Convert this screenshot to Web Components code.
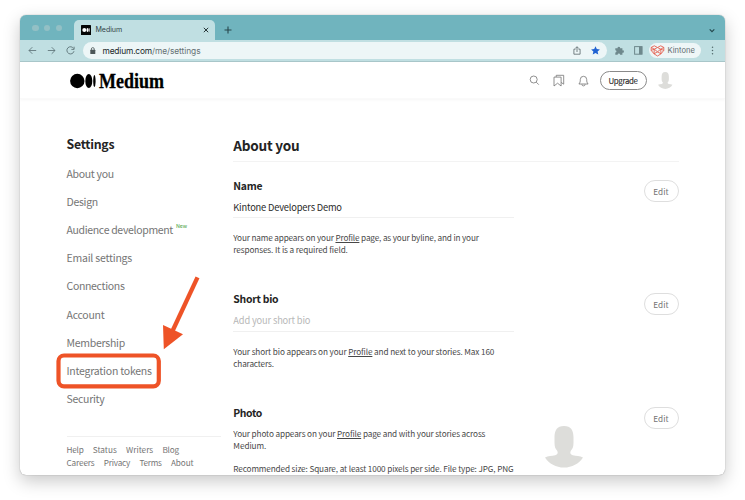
<!DOCTYPE html>
<html lang="en"><head><meta charset="utf-8"><title>Medium</title>
<style>
html,body{margin:0;background:#fff}
body{width:745px;height:500px;overflow:hidden;font-family:"Noto Sans CJK SC","Noto Sans",sans-serif;color:#292929}
</style></head><body>
<app-window></app-window>
<script>
const define=(name,html,after)=>customElements.define(name,class extends HTMLElement{
  connectedCallback(){
    if(this.shadowRoot)return;
    const t=document.createElement('template');
    t.innerHTML=typeof html==='function'?html(this):html;
    this.attachShadow({mode:'open'}).append(t.content.cloneNode(true));
    if(after)after(this);
  }
});

/* A single line of text: size in px, fit = target line width, reached by letter-spacing */
define('text-line',e=>`<style>:host{display:block;width:max-content;white-space:nowrap;font-size:${e.getAttribute('size')}px;line-height:${e.getAttribute('lh')||12}px}</style><slot></slot>`,e=>{
  const fit=+e.getAttribute('fit');
  if(!fit)return;
  const n=e.textContent.length, w=e.getBoundingClientRect().width;
  e.style.letterSpacing=((fit-w)/n).toFixed(3)+'px';
});

define('browser-tabs',`<style>
:host{display:flex;height:25px;background:#70b4be;align-items:flex-end;box-sizing:border-box}
.dots{display:flex;gap:5.2px;padding:0 11px 8.7px 12.3px;width:30.2px;height:6.6px}
.dots i{width:6.5px;height:6.5px;border-radius:50%;background:#93c0c5;flex:none}
.tab{margin-left:.5px;position:relative;width:141px;height:20px;background:#c0dfe2;border-radius:5px 5px 0 0;display:flex;align-items:center;box-sizing:border-box;padding:0 6px 0 7px;font-family:Inter,sans-serif;color:#344447}
.tab svg{flex:none}.tab .x{margin-left:auto}
.plus{margin:0 0 6.5px 9px}.more{margin:0 10px 7px auto}
svg{display:block}
</style>
<div class="dots"><i></i><i></i><i></i></div>
<div class="tab"><svg width="10" height="10"><rect width="10" height="10" rx=".6" fill="#050505"/><circle cx="3.3" cy="5" r="2" fill="#fff"/><ellipse cx="6.6" cy="5" rx="1.1" ry="1.9" fill="#fff"/><rect x="8.1" y="3.3" width=".6" height="3.4" fill="#fff"/></svg>
<text-line size="7.1" fit="26.6" style="margin:0 0 0 4.5px">Medium</text-line>
<svg class="x" width="6" height="6" viewBox="0 0 6 6"><path d="M.8.8l4.4 4.4M5.2.8L.8 5.2" stroke="#283638" stroke-width="1"/></svg></div>
<svg class="plus" width="8" height="8" viewBox="0 0 8 8"><path d="M4 .5v7M.5 4h7" stroke="#27464b" stroke-width="1.1"/></svg>
<svg class="more" width="6" height="5" viewBox="0 0 6 5"><path d="M.7 1.3L3 3.6 5.3 1.3" stroke="#24484e" stroke-width="1.2" fill="none"/></svg>`);

define('browser-bar',`<style>
:host{display:flex;height:22px;box-sizing:border-box;background:#c0dfe2;border-bottom:1px solid #a9c7ca;align-items:center;padding:0 10.5px 0 8px;font-family:Inter,sans-serif}
svg{display:block;flex:none}
.url{display:flex;align-items:center;flex:1;height:16.5px;background:#edf6f7;border-radius:9px;padding:0 6.5px 0 7.5px;margin:0 8px 0 8px}
.b{color:#20282a}.p{color:#657174}
.chip{display:flex;align-items:center;height:15.5px;width:52px;background:#eef6f7;border-radius:8px;margin:0 8.5px 0 6px;box-sizing:border-box;padding-left:1px;color:#5f6a6d}
</style>
<svg width="9" height="9" viewBox="0 0 9 9"><path d="M8.2 4.5H1M4.3 1.2L1 4.5l3.3 3.3" fill="none" stroke="#5d7478" stroke-width=".85"/></svg>
<svg style="margin-left:10px" width="9" height="9" viewBox="0 0 9 9"><path d="M.8 4.5H8M4.7 1.2L8 4.5 4.7 7.8" fill="none" stroke="#5d7478" stroke-width=".85"/></svg>
<svg style="margin-left:9.5px" width="9" height="9" viewBox="0 0 9 9"><path d="M7.6 2.5A3.6 3.6 0 1 0 8 5.2M8.1.7v2.7H5.4" fill="none" stroke="#5d7478" stroke-width=".9"/></svg>
<div class="url"><svg width="6" height="8" viewBox="0 0 6 8"><rect x=".3" y="2.8" width="5" height="4.2" rx=".5" fill="#4c5759"/><path d="M1.4 3V2a1.4 1.4 0 0 1 2.8 0v1" fill="none" stroke="#4c5759" stroke-width=".8"/></svg>
<text-line class="b" size="8.4" fit="49.5" style="margin-left:6.5px">medium.com</text-line><text-line class="p" size="8.4" fit="48.5">/me/settings</text-line>
<svg style="margin-left:auto" width="8" height="9" viewBox="0 0 8 9"><path d="M2.5 3.2H.9v5h6.2v-5H5.5M4 6V.9M2.2 2.5L4 .7l1.8 1.8" fill="none" stroke="#5b676a" stroke-width=".8"/></svg>
<svg style="margin-left:10.5px" width="9" height="9" viewBox="0 0 9 9"><path d="M4.5.2l1.3 2.9 3.1.3-2.3 2.1.7 3.1-2.8-1.6-2.8 1.6.7-3.1L.1 3.4l3.1-.3z" fill="#2163d2"/></svg></div>
<svg style="margin-left:.5px" width="9" height="9" viewBox="0 0 9 9"><path d="M.3 2.3h2.3a1.3 1.3 0 1 1 2.5 0h2.3v2.1a1.2 1.2 0 1 1 0 2.3v2.1H5.1a1.25 1.25 0 0 0-2.5 0H.3V6.6a1.15 1.15 0 0 0 0-2.3z" fill="#6e888c"/></svg>
<svg style="margin-left:10px" width="9" height="9" viewBox="0 0 9 9"><rect x=".6" y=".6" width="7.4" height="7.6" fill="none" stroke="#6e888c" stroke-width="1"/><rect x="5" y=".6" width="3.2" height="7.6" fill="#6e888c"/></svg>
<div class="chip"><svg width="15" height="12" viewBox="0 0 15 12"><g fill="none" stroke="#e5604f" stroke-width=".9" stroke-linejoin="round"><path d="M4.3.8L7.5 2.500 10.700.8 13.800 2.400V5.400L11 8.800 7.500 11 4 8.800 1.200 5.400V2.400z"/><path d="M1.200 2.400l3.100 1.800 3.200-1.700 3.200 1.700 3.100-1.800M1.200 5.400l3.100-1.200 3.200 2.600 3.200-2.600 3.100 1.200M4.300 4.200L4 8.800l3.500-2L11 8.800l-.3-4.600"/></g></svg><text-line size="7.6" fit="27.3" style="margin-left:2.5px">Kintone</text-line></div>
<svg width="5" height="9" viewBox="0 0 5 9"><g fill="#50686c"><circle cx="2.5" cy="1.3" r=".75"/><circle cx="2.5" cy="4.5" r=".75"/><circle cx="2.5" cy="7.7" r=".75"/></g></svg>`);

define('user-silhouette',e=>`<style>:host{display:block}svg{display:block}</style><svg width="${e.getAttribute('w')}" height="${e.getAttribute('h')}" viewBox="0 0 38 42" preserveAspectRatio="none"><path d="M19 0c7 0 9.5 4.500 9.500 11.500v5.500c0 4-1 6.500-2.700 8-1 2-.6 4 2 4.600 3.500.8 7 .8 10.200 2.200C34 38 27 42 19 42S4 38 0 31.800c3.200-1.400 6.700-1.400 10.200-2.200 2.600-.6 3-2.600 2-4.600-1.700-1.500-2.700-4-2.700-8v-5.500C9.500 4.500 12 0 19 0z" fill="#ddddda"/></svg>`);

define('site-nav',`<style>
:host{display:flex;height:37px;align-items:center;box-sizing:border-box;padding:1px 52.5px 0 50px;border-bottom:1px solid #fafafa;box-shadow:0 1px 3px #0000000a}
svg{display:block;flex:none}
.word{font-family:"Liberation Serif",serif;font-weight:bold;color:#000;-webkit-text-stroke:.3px #000;margin-left:3px;width:66px;transform:scaleX(.9);transform-origin:0 50%}
.up{display:flex;align-items:center;justify-content:center;width:47px;height:19px;box-sizing:border-box;border:1px solid #8a8a8a;border-radius:10px;margin:0 11.5px 0 11px;color:#292929;-webkit-text-stroke:.1px #292929}
</style>
<svg width="26" height="16" viewBox="0 0 26 16"><ellipse cx="7.3" cy="8" rx="7.2" ry="7.2"/><ellipse cx="18.8" cy="8" rx="3.5" ry="6.9"/><ellipse cx="24.4" cy="8" rx="1.2" ry="6.1"/></svg>
<text-line class="word" size="20" lh="22">Medium</text-line>
<svg style="margin-left:auto" width="11" height="11" viewBox="0 0 11 11"><circle cx="4.7" cy="4.5" r="3.5" fill="none" stroke="#757575" stroke-width=".8"/><path d="M7.3 7.2l2.5 2.5" stroke="#757575" stroke-width=".8"/></svg>
<svg style="margin-left:13px" width="12" height="13" viewBox="0 0 12 13"><path d="M1 3.1h7.1V12L4.55 9.2 1 12zM3.2 3V1.3h7.5v8.9L8.2 8.4" fill="none" stroke="#757575" stroke-width=".8"/></svg>
<svg style="margin-left:13px" width="11" height="12" viewBox="0 0 11 12"><path d="M.9 9c1.2-1.3 1.4-2.400 1.400-4.500a3.200 3.200 0 0 1 6.400 0C8.700 6.600 8.900 7.700 10.100 9zM3.900 9.300a1.600 1.600 0 0 0 3.200 0" fill="none" stroke="#757575" stroke-width=".8"/></svg>
<div class="up"><text-line size="7.9" fit="29">Upgrade</text-line></div>
<user-silhouette w="14.5" h="17"></user-silhouette>`);

define('side-menu',`<style>
:host{display:flex;flex-direction:column;width:154.5px;height:376px;color:#757575}
h1{margin:0;padding-top:37px;font-size:inherit;font-weight:bold;color:#242424}
.items{display:flex;flex-direction:column;margin-top:8px}
.items>div{height:28.12px;display:flex;align-items:center}
sup{line-height:0;font-size:inherit;margin:-9px 0 0 3px;color:#3f9e37}
footer{border-top:1px solid #f0f0f0;margin-top:23.3px;padding-top:4.8px}
footer div{display:flex;gap:9.3px;height:13px;align-items:center}
</style>
<h1><text-line size="12.3" lh="16" fit="47.8">Settings</text-line></h1>
<nav class="items">
<div><text-line size="10.5" fit="47.3">About you</text-line></div>
<div><text-line size="10.5" fit="31.5">Design</text-line></div>
<div><text-line size="10.5" fit="106.5">Audience development</text-line><sup><text-line size="5.4" lh="8" fit="11">New</text-line></sup></div>
<div><text-line size="10.5" fit="65.5">Email settings</text-line></div>
<div><text-line size="10.5" fit="58">Connections</text-line></div>
<div><text-line size="10.5" fit="38">Account</text-line></div>
<div><text-line size="10.5" fit="58.5">Membership</text-line></div>
<div><text-line size="10.5" fit="85.2">Integration tokens</text-line></div>
<div><text-line size="10.5" fit="38">Security</text-line></div>
</nav>
<footer><div><text-line size="8.2" fit="17">Help</text-line><text-line size="8.2" fit="24">Status</text-line><text-line size="8.2" fit="27">Writers</text-line><text-line size="8.2" fit="16.5">Blog</text-line></div>
<div><text-line size="8.2" fit="28">Careers</text-line><text-line size="8.2" fit="26.3">Privacy</text-line><text-line size="8.2" fit="22.3">Terms</text-line><text-line size="8.2" fit="22.5">About</text-line></div></footer>`);

define('pill-button',`<style>:host{display:flex;align-items:center;justify-content:center;width:35px;height:22px;box-sizing:border-box;border:1px solid #dedede;border-radius:11px;color:#757575;flex:none}</style><text-line size="8.2" style="letter-spacing:.05px"><slot></slot></text-line>`);

/* One settings row: title, optional value field, help text, edit button */
define('setting-row',`<style>
:host{display:flex;justify-content:space-between;align-items:flex-start}
.col{width:280.5px}
.t{font-weight:bold;color:#242424;height:13px}
.v ::slotted(*){margin-top:8px}
.v{border-bottom:1px solid #f0f0f0;height:26.8px;display:block;margin-bottom:13.2px;box-sizing:border-box;padding-top:.1px}
:host([novalue]) .v{display:none}
:host([novalue]) .t{margin-bottom:8.3px}
:host([novalue]) .col{width:312px}
.h{color:#484848}
pill-button{margin-top:1px}
</style><div class="col"><div class="t"><slot name="title"></slot></div><div class="v"><slot name="value"></slot></div><div class="h"><slot></slot></div></div><slot name="art"></slot><pill-button>Edit</pill-button>`);

define('settings-main',`<style>
:host{display:block;flex:1;height:376px;overflow:hidden}
h2{margin:0;font-size:inherit;height:63px;padding-top:37px;box-sizing:border-box;border-bottom:1px solid #f3f3f3;color:#242424}
setting-row{height:113.5px}
u{text-underline-offset:1px;text-decoration-thickness:.7px}
.first{margin-top:16.5px}
</style>
<h2><text-line size="13.6" lh="18" fit="66">About you</text-line></h2>
<setting-row class="first"><text-line slot="title" size="10.4" lh="13" fit="29">Name</text-line>
<text-line slot="value" size="9.3" lh="14" fit="108.5">Kintone Developers Demo</text-line>
<text-line size="8.2" fit="245.5">Your name appears on your <u>Profile</u> page, as your byline, and in your</text-line><text-line size="8.2" fit="114.5">responses. It is a required field.</text-line></setting-row>
<setting-row><text-line slot="title" size="10.4" lh="13" fit="45">Short bio</text-line>
<text-line slot="value" size="9.3" lh="14" fit="77" style="color:#b8b8b8">Add your short bio</text-line>
<text-line size="8.2" fit="261">Your short bio appears on your <u>Profile</u> and next to your stories. Max 160</text-line><text-line size="8.2" fit="40.5">characters.</text-line></setting-row>
<setting-row novalue><text-line slot="title" size="10.4" lh="13" fit="28.5">Photo</text-line>
<text-line size="8.2" fit="252">Your photo appears on your <u>Profile</u> page and with your stories across</text-line><text-line size="8.2" fit="33">Medium.</text-line><text-line size="8.2" fit="280.2" style="margin-top:11px">Recommended size: Square, at least 1000 pixels per side. File type: JPG, PNG</text-line>
<user-silhouette slot="art" w="38" h="41.5" style="margin:20.7px 61px 0 0"></user-silhouette></setting-row>`);

/* Highlight frame and arrow laid over the page */
define('callout-mark',`<style>:host{position:absolute;left:0;top:0;pointer-events:none}svg{display:block}</style>
<svg width="745" height="500"><rect x="58.5" y="355.5" width="100.3" height="30.8" rx="5.5" fill="none" stroke="#ee5327" stroke-width="4.2"/><path d="M197.5 277.3L172.5 331" stroke="#ee5327" stroke-width="4.3"/><path d="M163.8 349.2L163 325l20 9.200z" fill="#ee5327"/></svg>`);

define('app-window',`<style>
:host{display:block;padding:15px 20px 25px}
main{width:705px;height:460px;border-radius:6px;overflow:hidden;background:#fff;box-shadow:0 0 1px #0007,0 6px 17px #00000038}
.body{display:flex;padding:0 46.5px;gap:12.3px}
</style><main><browser-tabs></browser-tabs><browser-bar></browser-bar><site-nav></site-nav><div class="body"><side-menu></side-menu><settings-main></settings-main></div></main><callout-mark></callout-mark>`);
</script></body></html>
